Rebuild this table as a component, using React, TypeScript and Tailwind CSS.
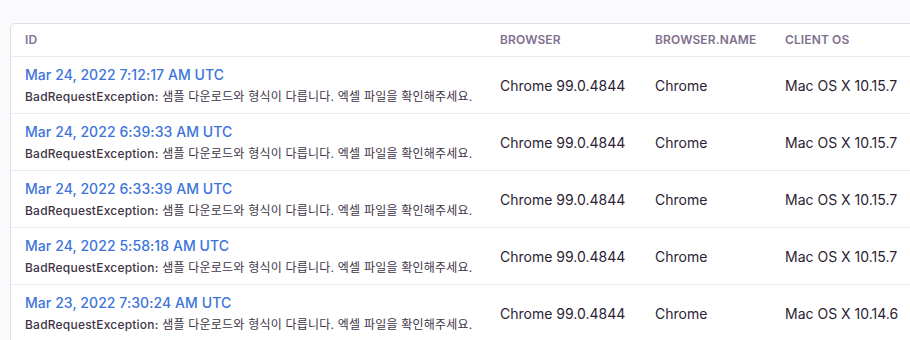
const rows = [
  { time: "Mar 24, 2022 7:12:17 AM UTC", os: "Mac OS X 10.15.7" },
  { time: "Mar 24, 2022 6:39:33 AM UTC", os: "Mac OS X 10.15.7" },
  { time: "Mar 24, 2022 6:33:39 AM UTC", os: "Mac OS X 10.15.7" },
  { time: "Mar 24, 2022 5:58:18 AM UTC", os: "Mac OS X 10.15.7" },
  { time: "Mar 23, 2022 7:30:24 AM UTC", os: "Mac OS X 10.14.6" },
];

const message = "샘플 다운로드와 형식이 다릅니다. 엑셀 파일을 확인해주세요.";

const grid = "grid grid-cols-[475px_155px_130px_1fr]";

export default function App() {
  return (
    <div
      className="h-[340px] w-[910px] overflow-hidden bg-[#faf9fb] pl-[10px] pt-[23px]"
      style={{ fontFamily: '"Inter", "Noto Sans CJK KR", sans-serif' }}
    >
      <div className="w-[960px] rounded-tl-[5px] border border-[#e2dee6] bg-white">
        {/* header */}
        <div className={`${grid} h-[33px] items-center border-b border-[#ebe8ee] text-[12px] font-semibold uppercase tracking-[0.01em] text-[#80708f]`}>
          <div className="pl-[14px]">ID</div>
          <div className="pl-[14px]">Browser</div>
          <div className="pl-[14px]">Browser.name</div>
          <div className="pl-[14px]">Client OS</div>
        </div>

        {rows.map((r, i) => (
          <div
            key={i}
            className={`${grid} h-[57px] items-center border-b border-[#ebe8ee] text-[14px] text-[#2b2233]`}
          >
            <div className="self-start pl-[14px] pt-[9px]">
              <div className="text-[14px] font-medium leading-[18px] tracking-[0.005em] text-[#3d74db]">{r.time}</div>
              <div className="mt-[5px] text-[12px] leading-[16px] tracking-[0.018em] text-[#3e3446]">
                <span className="font-medium">BadRequestException:</span> {message}
              </div>
            </div>
            <div className="pl-[14px]">Chrome 99.0.4844</div>
            <div className="pl-[14px]">Chrome</div>
            <div className="pl-[14px]">{r.os}</div>
          </div>
        ))}
      </div>
    </div>
  );
}
